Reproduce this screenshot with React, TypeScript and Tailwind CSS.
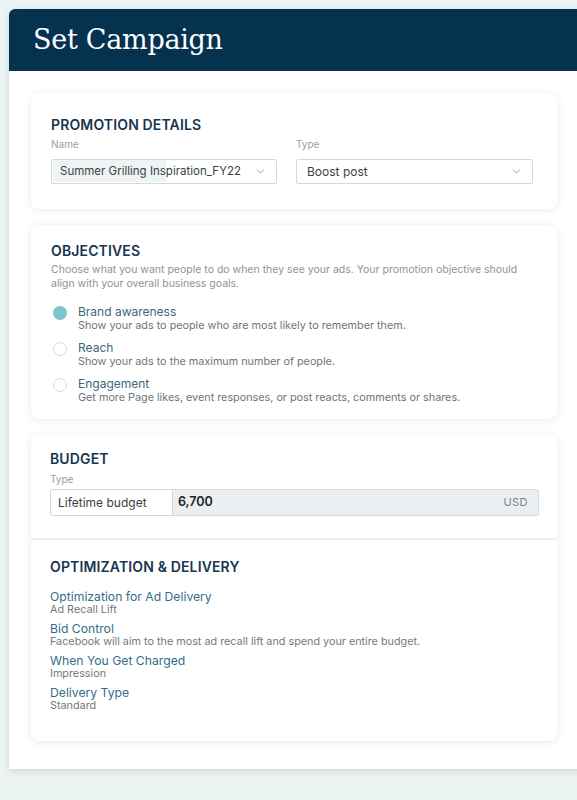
import { ChevronDown } from "lucide-react";

const objectives = [
  { title: "Brand awareness", text: "Show your ads to people who are most likely to remember them.", on: true },
  { title: "Reach", text: "Show your ads to the maximum number of people.", on: false },
  { title: "Engagement", text: "Get more Page likes, event responses, or post reacts, comments or shares.", on: false },
];

const delivery = [
  { title: "Optimization for Ad Delivery", text: "Ad Recall Lift" },
  { title: "Bid Control", text: "Facebook will aim to the most ad recall lift and spend your entire budget." },
  { title: "When You Get Charged", text: "Impression" },
  { title: "Delivery Type", text: "Standard" },
];

function Heading({ children }: { children: React.ReactNode }) {
  return <h2 className="text-[14px] font-semibold leading-5 tracking-[0.01em] text-[#173650]">{children}</h2>;
}

function Label({ children }: { children: React.ReactNode }) {
  return <p className="text-[10px] leading-4 text-[#9a9d9f]">{children}</p>;
}

export default function App() {
  return (
    <div className="min-h-[800px] overflow-hidden bg-[#ecf4f3] pt-[9px] font-['Inter',sans-serif]">
      <div className="ml-[9px] mr-[-12px] overflow-hidden rounded-tl-md bg-white shadow-[0_2px_6px_rgba(0,0,0,0.12)]">
        <header className="flex h-[62px] items-center bg-[#05324f] pl-[24px]">
          <h1 className="pb-[2px] font-['DejaVu_Serif',serif] text-[27px] leading-none tracking-[-0.01em] text-white">
            Set Campaign
          </h1>
        </header>

        <div className="flex flex-col gap-4 pb-7 pl-[22px] pt-[22px]">
          <section className="w-[526px] rounded-lg bg-white px-5 pb-[25px] pt-[22px] shadow-[0_1px_8px_rgba(0,0,0,0.09)]">
            <Heading>PROMOTION DETAILS</Heading>
            <div className="mt-[1px] flex gap-[19px]">
              <div className="w-[226px]">
                <Label>Name</Label>
                <div className="mt-[7px] flex h-[25px] items-center justify-between rounded-[2px] border border-[#d6d9db] pl-[1px] pr-[9px]">
                  <span className="text-[11.5px] text-[#3b3f42]">
                    <span className="bg-[#eef3f4] py-[4px] pl-[7px]">Summer Grilling Ins</span>piration_FY22
                  </span>
                  <ChevronDown className="size-[13px] text-[#7d8184]" strokeWidth={1.5} />
                </div>
              </div>
              <div className="w-[237px]">
                <Label>Type</Label>
                <div className="mt-[7px] flex h-[25px] items-center justify-between rounded-[2px] border border-[#d6d9db] pl-[10px] pr-[9px]">
                  <span className="text-[12px] text-[#3b3f42]">Boost post</span>
                  <ChevronDown className="size-[13px] text-[#7d8184]" strokeWidth={1.5} />
                </div>
              </div>
            </div>
          </section>

          <section className="w-[526px] rounded-lg bg-white px-5 pb-[14px] pt-[16px] shadow-[0_1px_8px_rgba(0,0,0,0.09)]">
            <Heading>OBJECTIVES</Heading>
            <p className="mt-[2px] text-[10.5px] leading-[14px] text-[#8f9395]">
              Choose what you want people to do when they see your ads. Your promotion objective should align with your overall business goals.
            </p>
            <div className="mt-[14px] flex flex-col gap-[8px]">
              {objectives.map((o) => (
                <div key={o.title} className="flex gap-[11px] pl-[2px]">
                  <span
                    className={
                      o.on
                        ? "mt-[1px] size-[14px] shrink-0 rounded-full bg-[#7fc4cc]"
                        : "mt-[1px] size-[14px] shrink-0 rounded-full border border-[#d9dcdd] bg-white"
                    }
                  />
                  <div>
                    <p className="text-[12px] leading-[14px] text-[#40667a]">{o.title}</p>
                    <p className="text-[10.8px] leading-[14px] text-[#6f7477]">{o.text}</p>
                  </div>
                </div>
              ))}
            </div>
          </section>

          <section className="w-[526px] overflow-hidden rounded-lg bg-white shadow-[0_1px_8px_rgba(0,0,0,0.09)]">
            <div className="px-[19px] pb-[22px] pt-[14px]">
              <Heading>BUDGET</Heading>
              <div className="mt-[2px]">
                <Label>Type</Label>
              </div>
              <div className="mt-[2px] flex h-[27px] w-[489px] rounded-[2px] border border-[#d6d9db]">
                <div className="flex w-[122px] items-center border-r border-[#d6d9db] pl-[7px] text-[12px] text-[#3b3f42]">
                  Lifetime budget
                </div>
                <div className="flex flex-1 items-center justify-between bg-[#eceff1] pl-[5px] pr-[10px]">
                  <span className="text-[12.5px] font-semibold text-[#1f2326]">6,700</span>
                  <span className="text-[11px] tracking-[0.04em] text-[#7d8184]">USD</span>
                </div>
              </div>
            </div>
            <div className="border-t-2 border-[#eef0f1] px-[19px] pb-[29px] pt-[17px]">
              <Heading>OPTIMIZATION &amp; DELIVERY</Heading>
              <div className="mt-[13px] flex flex-col gap-[6px]">
                {delivery.map((d) => (
                  <div key={d.title}>
                    <p className="text-[12.2px] leading-[13px] text-[#2f6f88]">{d.title}</p>
                    <p className="text-[10.8px] leading-[13px] text-[#74787b]">{d.text}</p>
                  </div>
                ))}
              </div>
            </div>
          </section>
        </div>
      </div>
    </div>
  );
}
